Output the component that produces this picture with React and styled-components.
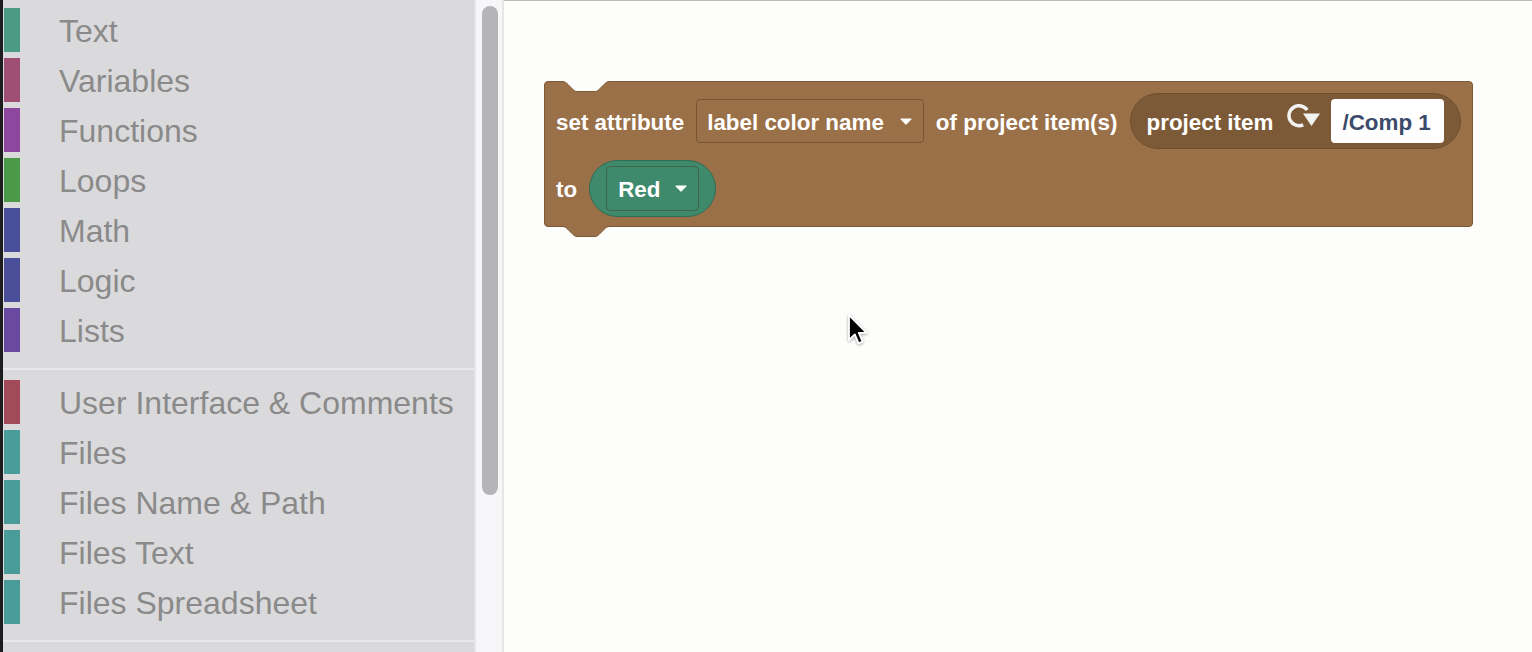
import React from 'react';
import styled, { createGlobalStyle } from 'styled-components';

const GlobalStyle = createGlobalStyle`
  html, body {
    margin: 0;
    padding: 0;
    overflow: hidden;
  }
  body {
    font-family: "Liberation Sans", Arial, sans-serif;
  }
`;

const Page = styled.div`
  display: flex;
  height: 652px;
  width: 1532px;
`;

const DarkEdge = styled.div`
  width: 3px;
  background: #1d1d1f;
`;

const Flyout = styled.div`
  width: 471px;
  background: #dadadc;
  overflow: hidden;
  display: flex;
  flex-direction: column;
`;

const Group = styled.div`
  padding: ${(p) => p.$top}px 0 13px 0;
  border-bottom: 2px solid #e9e9eb;
`;

const Category = styled.div`
  display: flex;
  align-items: center;
  height: 50px;
  padding-left: 1px;
`;

const Tag = styled.div`
  width: 16px;
  height: 44px;
  background: ${(p) => p.$color};
`;

const CategoryName = styled.span`
  margin-left: 39px;
  padding-top: 2px;
  font-size: 32px;
  line-height: 50px;
  color: #8a8a8a;
  white-space: nowrap;
`;

const FlyoutEdge = styled.div`
  width: 2px;
  background: #e5e5e7;
`;

const ScrollTrack = styled.div`
  width: 26px;
  background: #f7f7f9;
  padding-top: 6px;
  box-sizing: border-box;
`;

const Thumb = styled.div`
  width: 16px;
  height: 489px;
  margin-left: 6px;
  border-radius: 8px;
  background: #b5b5b7;
`;

const Divider = styled.div`
  width: 2px;
  background: #e6e6e6;
`;

const Workspace = styled.div`
  flex: 1;
  position: relative;
  background: #fdfdfb;
  border-top: 1px solid #bdbdbd;
  padding: 80px 0 0 40px;
`;

const Block = styled.div`
  position: relative;
  display: inline-flex;
  flex-direction: column;
  gap: 11px;
  padding: 11px 11px 9px 11px;
  background: #9a7049;
  border: 1px solid #7b5836;
  border-radius: 4px;
  color: #fff;
  font-weight: 700;
  font-size: 22.4px;
`;

const Notch = styled.svg`
  position: absolute;
  top: -1px;
  left: 17px;
  overflow: visible;
`;

const Tab = styled.svg`
  position: absolute;
  top: 100%;
  left: 17px;
  overflow: visible;
`;

const Row = styled.div`
  display: flex;
  align-items: center;
  gap: 12px;
`;

const Label = styled.span`
  white-space: nowrap;
  padding-top: 3px;
`;

const Dropdown = styled.div`
  display: flex;
  align-items: center;
  gap: ${(p) => (p.$green ? 15 : 16)}px;
  height: ${(p) => (p.$green ? 45 : 44)}px;
  box-sizing: border-box;
  padding: ${(p) => (p.$green ? '0 11px 0 11px' : '0 11px 0 10px')};
  border: 1px solid rgba(60, 35, 10, 0.35);
  border-radius: 4px;
  white-space: nowrap;
`;

const Pill = styled.div`
  display: flex;
  align-items: center;
  height: 56px;
  box-sizing: border-box;
  padding: 0 16px 0 16px;
  border-radius: 28px;
  background: #7d5a37;
  border: 1px solid #6f4f30;
`;

const PillLabel = styled(Label)`
  margin-right: 13px;
`;

const Field = styled.div`
  display: flex;
  align-items: center;
  height: 44px;
  box-sizing: border-box;
  margin-left: 11px;
  padding: 3px 13px 0 11px;
  border-radius: 4px;
  background: #fff;
  color: #3c4a6b;
  white-space: nowrap;
`;

const ColorPill = styled.div`
  display: flex;
  align-items: center;
  height: 57px;
  box-sizing: border-box;
  padding: 0 16px;
  border-radius: 29px;
  background: #3f8a6d;
  border: 1px solid #2f6c55;
`;

const Cursor = styled.svg`
  position: absolute;
  left: 343px;
  top: 312px;
  overflow: visible;
  filter: drop-shadow(0 1px 1.5px rgba(0, 0, 0, 0.35));
`;

const Caret = () => (
  <svg width="12" height="7" viewBox="0 0 12 7">
    <path d="M1 0.5 H11 Q12 0.5 11.3 1.4 L6.7 6.3 Q6 7 5.3 6.3 L0.7 1.4 Q0 0.5 1 0.5 Z" fill="#fff" />
  </svg>
);

const RefreshIcon = () => (
  <svg width="34" height="34" viewBox="0 0 34 34">
    <path d="M17.2 20.8 A10 10 0 1 1 21.2 6" fill="none" stroke="#f2f2f2" strokeWidth="3.5" />
    <path d="M17 9.5 L34 9.5 L25.5 22 Z" fill="#f2f2f2" />
  </svg>
);

const notchCurve =
  'M0 0.5 C3 0.5 4 1.5 6 3.5 L11 8.5 C13 10.5 14 10.5 17 10.5 L31 10.5 C34 10.5 35 10.5 37 8.5 L42 3.5 C44 1.5 45 0.5 48 0.5';

const groupOne = [
  ['Text', '#4a9a84'],
  ['Variables', '#9f4f74'],
  ['Functions', '#8d479e'],
  ['Loops', '#4b9a4a'],
  ['Math', '#4a4f9c'],
  ['Logic', '#4b4f9a'],
  ['Lists', '#6a4aa0'],
];

const groupTwo = [
  ['User Interface & Comments', '#a34a58'],
  ['Files', '#4a9c9a'],
  ['Files Name & Path', '#4a9c9a'],
  ['Files Text', '#4a9c9a'],
  ['Files Spreadsheet', '#4a9c9a'],
];

const App = () => (
  <>
    <GlobalStyle />
    <Page>
      <DarkEdge />
      <Flyout>
        <Group $top={5}>
          {groupOne.map(([name, color]) => (
            <Category key={name}>
              <Tag $color={color} />
              <CategoryName>{name}</CategoryName>
            </Category>
          ))}
        </Group>
        <Group $top={7}>
          {groupTwo.map(([name, color]) => (
            <Category key={name}>
              <Tag $color={color} />
              <CategoryName>{name}</CategoryName>
            </Category>
          ))}
        </Group>
      </Flyout>
      <FlyoutEdge />
      <ScrollTrack>
        <Thumb />
      </ScrollTrack>
      <Divider />
      <Workspace>
        <Block>
          <Notch width="48" height="12" viewBox="0 0 48 12">
            <path d={notchCurve + ' L48 0 L0 0 Z'} fill="#fdfdfb" />
            <path d={notchCurve} fill="none" stroke="#7b5836" strokeWidth="1" />
          </Notch>
          <Row>
            <Label>set attribute</Label>
            <Dropdown>
              <Label>label color name</Label>
              <Caret />
            </Dropdown>
            <Label>of project item(s)</Label>
            <Pill>
              <PillLabel>project item</PillLabel>
              <RefreshIcon />
              <Field>/Comp 1</Field>
            </Pill>
          </Row>
          <Row>
            <Label>to</Label>
            <ColorPill>
              <Dropdown $green>
                <Label>Red</Label>
                <Caret />
              </Dropdown>
            </ColorPill>
          </Row>
          <Tab width="48" height="12" viewBox="0 0 48 12">
            <rect x="0.5" y="-1" width="47" height="2" fill="#9a7049" />
            <path d={notchCurve} fill="#9a7049" stroke="#7b5836" strokeWidth="1" />
          </Tab>
        </Block>
        <Cursor width="22" height="34" viewBox="0 0 22 34">
          <path
            d="M2 2 L2 27 L7.8 21.4 L11.6 30.4 L15.6 28.7 L11.8 19.9 L19.6 19.9 Z"
            fill="#000"
            stroke="#fff"
            strokeWidth="1.8"
            strokeLinejoin="round"
          />
        </Cursor>
      </Workspace>
    </Page>
  </>
);

export default App;
